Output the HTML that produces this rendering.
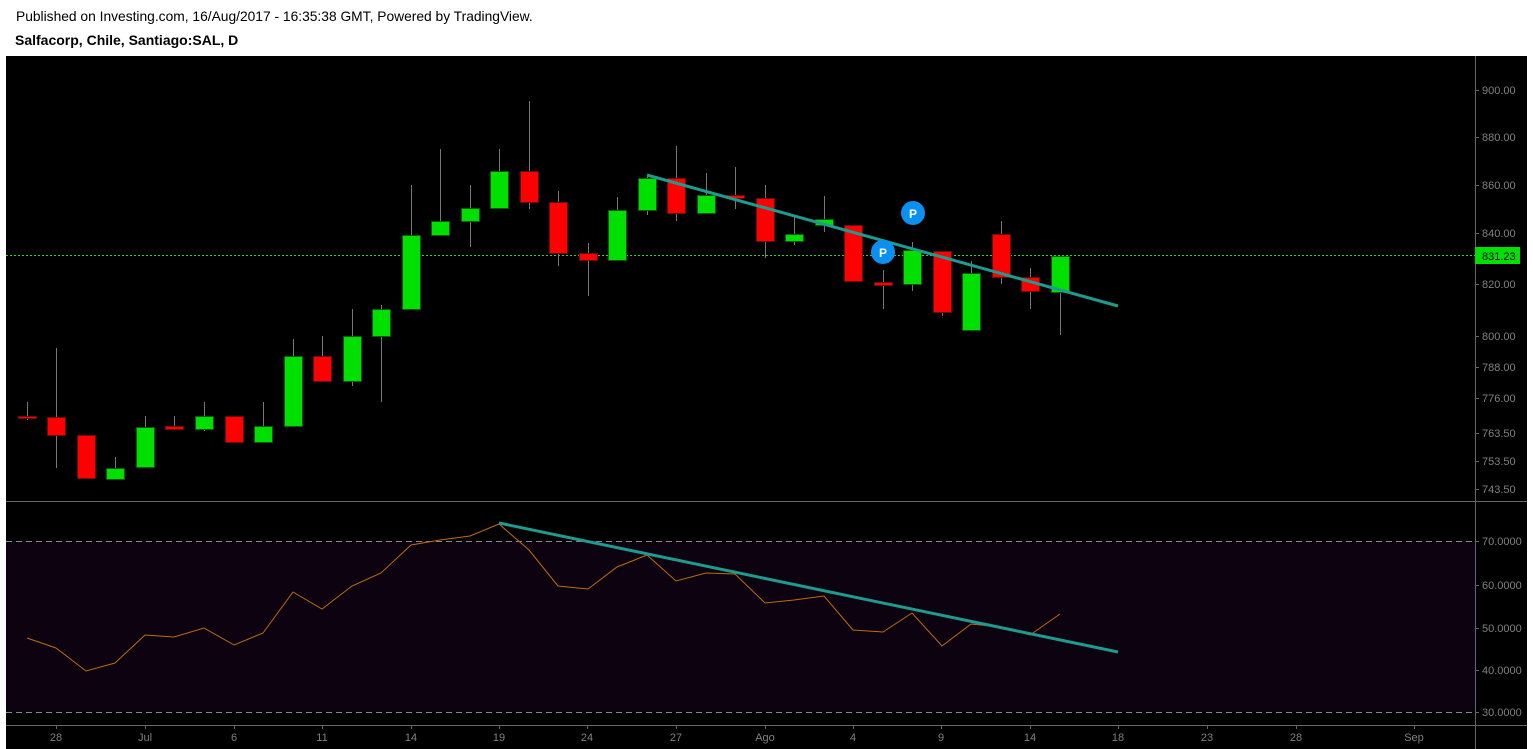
<!DOCTYPE html>
<html><head><meta charset="utf-8"><style>
html,body{margin:0;padding:0;background:#fff;width:1533px;height:749px;overflow:hidden;font-family:"Liberation Sans",sans-serif}
.h1{position:absolute;left:16px;top:9px;font-size:13.8px;color:#000}
.h2{position:absolute;left:15px;top:32px;font-size:14px;font-weight:bold;color:#000}
svg{position:absolute;left:0;top:0}
text{font-family:"Liberation Sans",sans-serif;font-size:11px;fill:#808080}
</style></head><body>
<div class="h1">Published on Investing.com, 16/Aug/2017 - 16:35:38 GMT, Powered by TradingView.</div>
<div class="h2">Salfacorp, Chile, Santiago:SAL, D</div>
<svg id="s" width="1533" height="749" xmlns="http://www.w3.org/2000/svg">
<rect x="6" y="56" width="1521" height="693" fill="#000"/>
<rect x="6" y="541" width="1469" height="171" fill="#0c0210"/>
<line x1="6" y1="501.5" x2="1527" y2="501.5" stroke="#666"/>
<line x1="6" y1="725.5" x2="1527" y2="725.5" stroke="#666"/>
<line x1="1475.5" y1="56" x2="1475.5" y2="749" stroke="#666"/>
<line x1="6" y1="541.5" x2="1475" y2="541.5" stroke="#888" stroke-dasharray="6,4"/>
<line x1="6" y1="712.5" x2="1475" y2="712.5" stroke="#888" stroke-dasharray="6,4"/>
<line x1="6" y1="255.5" x2="1475" y2="255.5" stroke="#2fd02f" stroke-dasharray="2,2"/>
<g id="c"></g>
<line x1="647" y1="175" x2="1118" y2="306" stroke="#1f9a8e" stroke-width="3"/>
<polyline fill="none" stroke="#c06a10" stroke-width="1" points="27,638 56,648 86,671 115,663 145,635 174,637 204,628 234,645 263,633 293,592 322,609 352,586 381,573 411,545 440,540 470,536 499,524 529,550 558,586 588,589 617,567 647,555 676,581 706,573 735,574 765,603 794,600 824,596 853,630 883,632 912,613 942,646 971,624 1001,627 1030,635 1060,614"/>
<line x1="499" y1="523" x2="1118" y2="652" stroke="#1f9a8e" stroke-width="3"/>
<circle cx="913" cy="213" r="12" fill="#0a90f0"/><text x="913" y="218" text-anchor="middle" style="fill:#fff;font-weight:bold;font-size:12px">P</text>
<circle cx="883" cy="252" r="12" fill="#0a90f0"/><text x="883" y="257" text-anchor="middle" style="fill:#fff;font-weight:bold;font-size:12px">P</text>
<rect x="1475" y="247" width="45" height="17" fill="#00e000"/>
<text x="1482" y="260" style="fill:#000">831.23</text>
<g id="ax"></g>
</svg>
<script>
var C=[[27,416,418,402,420,0],[56,417,435,348,468,0],[86,435,478,435,478,0],[115,468,479,457,479,1],[145,427,467,416,467,1],[174,426,429,416,430,0],[204,416,429,402,431,1],[234,416,442,416,442,0],[263,426,442,402,442,1],[293,356,426,339,426,1],[322,356,381,336,381,0],[352,336,381,309,386,1],[381,309,336,305,402,1],[411,235,309,185,309,1],[440,221,235,149,235,1],[470,208,221,185,247,1],[499,171,208,149,208,1],[529,171,202,101,209,0],[558,202,253,191,266,0],[588,253,260,243,296,0],[617,210,260,197,260,1],[647,178,210,175,215,1],[676,178,213,146,221,0],[706,195,213,173,213,1],[735,195,198,167,209,0],[765,198,241,185,258,0],[794,234,241,215,245,1],[824,219,225,196,232,1],[853,225,281,225,281,0],[883,282,285,270,309,0],[912,250,284,242,291,1],[942,251,312,251,316,0],[971,273,330,261,330,1],[1001,234,277,221,284,0],[1030,277,291,268,309,0],[1060,256,292,256,335,1]];
var g=document.getElementById('c'),h='';
C.forEach(function(c){h+='<line x1="'+c[0]+'.5" y1="'+c[3]+'" x2="'+c[0]+'.5" y2="'+c[4]+'" stroke="#777"/>';
h+='<rect x="'+(c[0]-9)+'.5" y="'+c[1]+'.5" width="18" height="'+Math.max(2,c[2]-c[1])+'" fill="'+(c[5]?'#00e000':'#ff0000')+'" stroke="'+(c[5]?'#0b5a0b':'#6a0a0a')+'"/>';});
g.innerHTML=h;
var a='',P=[[900.00,90],[880.00,137],[860.00,185],[840.00,233],[820.00,284],[800.00,336],[788.00,367],[776.00,398],[763.50,433],[753.50,461],[743.50,489],[70,541],[60,585],[50,628],[40,670],[30,712]];
P.forEach(function(p){a+='<line x1="1475" y1="'+p[1]+'.5" x2="1479" y2="'+p[1]+'.5" stroke="#666"/><text x="1482" y="'+(p[1]+4)+'">'+(p[1]>500?p[0].toFixed(4):p[0].toFixed(2))+'</text>';});
var X=[[56,'28'],[145,'Jul'],[234,'6'],[322,'11'],[411,'14'],[499,'19'],[587,'24'],[676,'27'],[765,'Ago'],[853,'4'],[941,'9'],[1030,'14'],[1118,'18'],[1207,'23'],[1296,'28'],[1414,'Sep']];
X.forEach(function(x){a+='<line x1="'+x[0]+'.5" y1="725" x2="'+x[0]+'.5" y2="729" stroke="#666"/><text x="'+x[0]+'" y="741" text-anchor="middle">'+x[1]+'</text>';});
document.getElementById('ax').innerHTML=a;
</script>
</body></html>
